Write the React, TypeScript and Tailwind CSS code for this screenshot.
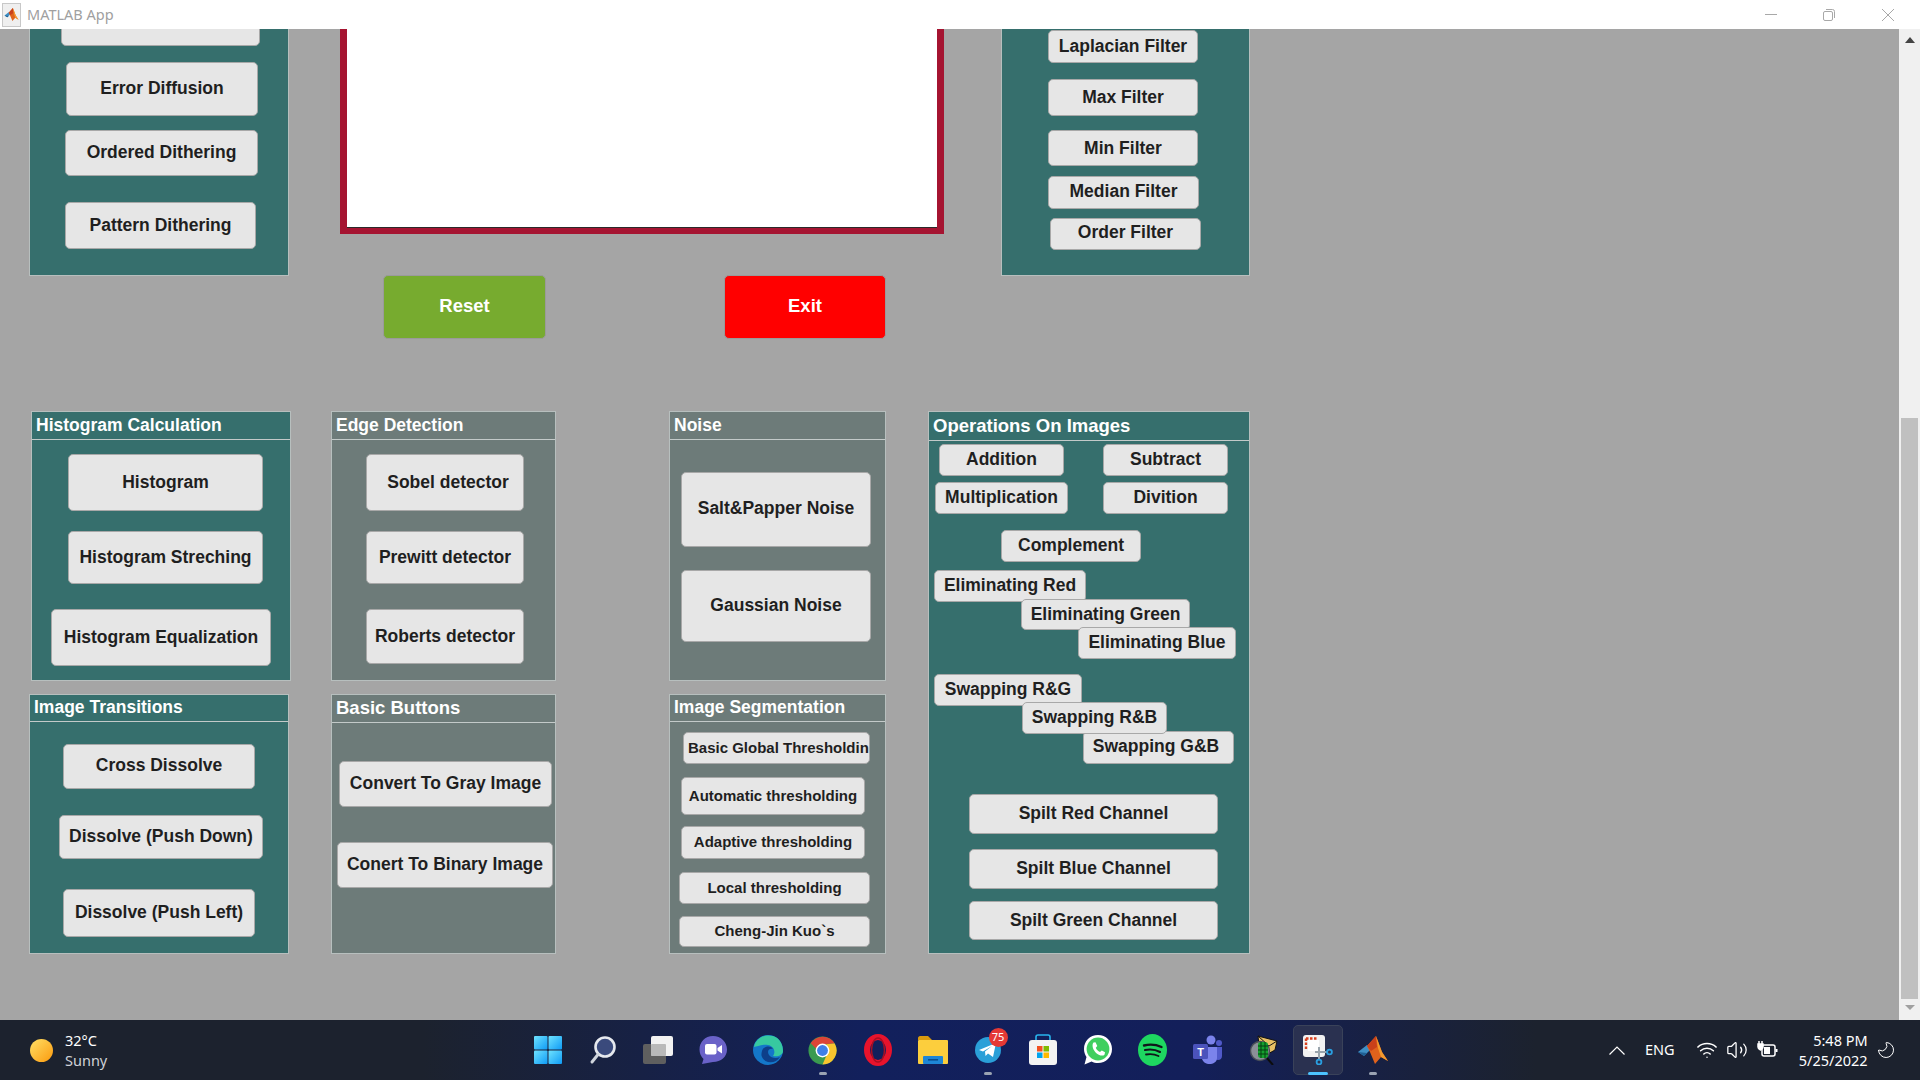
import React from "react";
import { Moon, Volume2, Wifi } from "lucide-react";

function Btn({ label, className, small }: { label: string; className: string; small?: boolean }) {
  return (
    <button className={`flex shrink-0 items-center justify-center overflow-hidden whitespace-nowrap rounded-[5px] border border-[#a8a8a8] bg-[#e6e6e6] font-bold text-[#1f1f1f] ${small ? "text-[15px]" : "pb-[1px] text-[17.5px]"} ${className}`}>
      {label}
    </button>
  );
}

function Panel({ title, className, headerClass, children }: { title: string; className: string; headerClass: string; children: React.ReactNode }) {
  return (
    <div className={`flex shrink-0 flex-col items-start overflow-hidden border border-[#b7bfbe] ${className}`}>
      <div className={`flex w-full shrink-0 items-center border-b border-[#c3cac9] pb-[1px] pl-[4px] font-bold text-white ${headerClass}`}>{title}</div>
      {children}
    </div>
  );
}

function MatlabLogo({ size }: { size: number }) {
  return (
    <svg width={size} height={size} viewBox="0 0 32 32">
      <polygon points="1,18 10,11 14,15 7,22" fill="#3f8fc4" />
      <polygon points="7,22 1,18 10,19" fill="#1f5f94" />
      <polygon points="10,12 19,2 25,18 31,27 24,23 18,30 13,18" fill="#e0621c" />
      <polygon points="10,12 19,2 20,13 14,17" fill="#c9401a" />
      <polygon points="19,2 25,18 31,27 24,23 21,14" fill="#f29a2e" />
    </svg>
  );
}

function Slot({ children, dot }: { children: React.ReactNode; dot?: boolean }) {
  return (
    <div className="relative flex h-[60px] w-[55px] shrink-0 items-center justify-center">
      {children}
      {dot && <div className="absolute bottom-[5px] h-[3px] w-[8px] rounded-full bg-[#9aa3b2]" />}
    </div>
  );
}

function TaskbarIcons() {
  return (
    <div className="flex h-full shrink-0">
      <Slot>
        <svg width="30" height="30" viewBox="0 0 30 30">
          <defs>
            <linearGradient id="win" x1="0" y1="0" x2="1" y2="1">
              <stop offset="0" stopColor="#6fe3ff" />
              <stop offset="1" stopColor="#0f9bf5" />
            </linearGradient>
          </defs>
          <rect x="1" y="1" width="13.5" height="13.5" rx="1" fill="url(#win)" />
          <rect x="15.5" y="1" width="13.5" height="13.5" rx="1" fill="url(#win)" />
          <rect x="1" y="15.5" width="13.5" height="13.5" rx="1" fill="url(#win)" />
          <rect x="15.5" y="15.5" width="13.5" height="13.5" rx="1" fill="url(#win)" />
        </svg>
      </Slot>
      <Slot>
        <svg width="30" height="30" viewBox="0 0 30 30">
          <circle cx="17" cy="12" r="9.5" fill="#3a4a7c" stroke="#e6e9ee" strokeWidth="2.6" />
          <line x1="10" y1="19.5" x2="4" y2="27" stroke="#cfd4dc" strokeWidth="3" strokeLinecap="round" />
        </svg>
      </Slot>
      <Slot>
        <svg width="32" height="30" viewBox="0 0 32 30">
          <rect x="1" y="9" width="23" height="20" rx="2" fill="#5f5f5f" />
          <rect x="9" y="1" width="22" height="20" rx="2" fill="#f2f2f2" />
          <rect x="9" y="9" width="15" height="12" rx="1" fill="#b9b9b9" />
        </svg>
      </Slot>
      <Slot>
        <svg width="30" height="30" viewBox="0 0 30 30">
          <path d="M15 1 C23 1 29 7 29 14.5 C29 22 23 27 15 27 L4 29 L5.5 24 C3 21.5 1.5 18.5 1.5 14.5 C1.5 7 7 1 15 1 Z" fill="#6a62c8" />
          <rect x="7" y="9" width="11.5" height="10.5" rx="2" fill="#fff" />
          <path d="M19.5 13 L24 10 V18.5 L19.5 15.5 Z" fill="#fff" />
        </svg>
      </Slot>
      <Slot>
        <svg width="32" height="32" viewBox="0 0 32 32">
          <circle cx="16" cy="16" r="15" fill="#1477c9" />
          <path d="M2 13 C4 3 14 0 21 2 C28 4 31 11 31 17 C31 21 26 23 21 22 C24 18 22 12 16 11 C10 10 5 13 2 13 Z" fill="#37c9a0" />
          <path d="M10 17 C11 12 19 11 21 15 C16 14 15 18 17 21 C19 24 24 25 28 23 C24 30 13 30 10 23 C9 21 9.5 19 10 17 Z" fill="#0d3f8a" />
        </svg>
      </Slot>
      <Slot dot>
        <svg width="29" height="29" viewBox="0 0 32 32">
          <circle cx="16" cy="16" r="15.5" fill="#3a9a4f" />
          <path d="M3 8 A15.5 15.5 0 0 1 29.4 8.2 L16 9 L9 14 Z" fill="#dc4437" />
          <path d="M29.4 8.2 A15.5 15.5 0 0 1 16 31.5 L22 18 L20 9 Z" fill="#f8c52e" />
          <circle cx="16" cy="16" r="7.6" fill="#fff" />
          <circle cx="16" cy="16" r="6" fill="#3f7fe8" />
        </svg>
      </Slot>
      <Slot>
        <svg width="28" height="32" viewBox="0 0 28 32">
          <ellipse cx="14" cy="16" rx="11" ry="13" fill="none" stroke="#e8132c" strokeWidth="6" />
          <ellipse cx="14" cy="16" rx="6.5" ry="12" fill="none" stroke="#a90f22" strokeWidth="1.5" />
        </svg>
      </Slot>
      <Slot>
        <svg width="32" height="30" viewBox="0 0 32 30">
          <path d="M1 3 C1 2 2 1 3 1 H11 L15 5 H1 Z" fill="#d99a0e" />
          <rect x="1" y="5" width="30" height="24" rx="1" fill="#fcce3d" />
          <rect x="6" y="21" width="20" height="8" rx="1" fill="#1e86d6" />
          <rect x="11" y="24" width="10" height="1.6" fill="#0a4f8f" />
        </svg>
      </Slot>
      <Slot dot>
        <div className="relative">
          <svg width="28" height="30" viewBox="0 0 28 30">
            <circle cx="14" cy="15" r="13" fill="#2a9fd8" />
            <path d="M5 15 L22 8 L19 22 L14 18.5 L11.5 21 L11 16.5 L18 11 L9 16.5 Z" fill="#fff" />
          </svg>
          <div className="absolute left-[15px] top-[-7px] flex h-[19px] w-[19px] items-center justify-center rounded-full bg-[#e53935] font-['Noto_Sans',sans-serif] text-[11px] text-white">75</div>
        </div>
      </Slot>
      <Slot>
        <svg width="30" height="32" viewBox="0 0 30 32">
          <path d="M8 7 V3 C8 2 9 1 10 1 H20 C21 1 22 2 22 3 V7" fill="none" stroke="#28b5ee" strokeWidth="1.6" />
          <rect x="1" y="6" width="28" height="25" rx="3" fill="#f3f3f3" />
          <rect x="9" y="12" width="5.5" height="5.5" fill="#f25022" />
          <rect x="15.5" y="12" width="5.5" height="5.5" fill="#7fba00" />
          <rect x="9" y="18.5" width="5.5" height="5.5" fill="#00a4ef" />
          <rect x="15.5" y="18.5" width="5.5" height="5.5" fill="#ffb900" />
        </svg>
      </Slot>
      <Slot>
        <svg width="30" height="32" viewBox="0 0 30 32">
          <path d="M15 1 C23 1 29 7 29 15 C29 23 23 29 15 29 C12.6 29 10.5 28.4 8.6 27.4 L1.5 30.5 L3.5 23 C2 20.8 1 18 1 15 C1 7 7 1 15 1 Z" fill="#fff" />
          <circle cx="15" cy="15" r="11.4" fill="#3fcf5f" />
          <path d="M10.5 8.5 L12.5 8.3 L14.3 12 L12.8 13.8 C13.6 15.8 15 17.2 17 18 L18.8 16.4 L22 18.2 L21.6 20.4 C20 22.4 16.5 21.8 13.4 19.2 C10 16.2 8.4 11 10.5 8.5 Z" fill="#fff" />
        </svg>
      </Slot>
      <Slot>
        <svg width="29" height="32" viewBox="0 0 29 32">
          <ellipse cx="14.5" cy="16" rx="14.5" ry="16" fill="#1ed760" />
          <path d="M6 11.5 C12 10 18 10.5 23.5 13" fill="none" stroke="#10161a" strokeWidth="2.4" strokeLinecap="round" />
          <path d="M7 16 C12 15 17.5 15.5 22 18" fill="none" stroke="#10161a" strokeWidth="2.1" strokeLinecap="round" />
          <path d="M8 20.5 C12.5 19.6 16.5 20 20.5 22" fill="none" stroke="#10161a" strokeWidth="1.8" strokeLinecap="round" />
        </svg>
      </Slot>
      <Slot>
        <svg width="30" height="30" viewBox="0 0 30 30">
          <circle cx="18" cy="5" r="4.5" fill="#7b83eb" />
          <circle cx="26" cy="8" r="3" fill="#5059c9" />
          <path d="M22 12 H29 V21 C29 25 25 26 22 24 Z" fill="#5059c9" />
          <path d="M9 12 H24 V23 C24 27 20 29 16.5 29 C13 29 10 27 9 24 Z" fill="#7b83eb" />
          <rect x="0" y="9" width="15" height="15" rx="1.5" fill="#4b53bc" />
          <text x="7.5" y="21" textAnchor="middle" fontSize="11" fontWeight="700" fontFamily="Liberation Sans, sans-serif" fill="#fff">T</text>
        </svg>
      </Slot>
      <Slot>
        <svg width="30" height="30" viewBox="0 0 30 30">
          <polygon points="10,1 29,6 27,15 18,20 11,10" fill="#e8c064" stroke="#141414" strokeWidth="1" />
          <path d="M10 1 L21 11 L29 6" fill="none" stroke="#141414" strokeWidth="1" />
          <circle cx="12" cy="16" r="9.5" fill="#8b9097" stroke="#4a4f57" strokeWidth="1.4" />
          <rect x="10" y="7" width="10" height="16" rx="3" fill="#14a02e" />
          <path d="M10 11 H20 M10 15 H20 M10 19 H20 M13 7 V23 M17 7 V23" stroke="#063d12" strokeWidth="1" />
          <line x1="19" y1="23" x2="25" y2="30" stroke="#0c0c0c" strokeWidth="2" />
        </svg>
      </Slot>
      <div className="relative flex h-[60px] w-[55px] shrink-0 items-center justify-center">
        <div className="absolute left-[3px] top-[5px] h-[50px] w-[50px] rounded-[5px] border border-[#3a4259] bg-[#2a3150]" />
        <svg className="relative" width="30" height="30" viewBox="0 0 30 30">
          <rect x="0" y="0" width="22" height="22" rx="3" fill="#f2f2f2" />
          <path d="M3 3.5 H14 M3 3.5 V15" fill="none" stroke="#d9401f" strokeWidth="2.4" strokeDasharray="2.5 1.5" />
          <path d="M5 5 H16 V16 H5 Z" fill="#fff" />
          <line x1="12" y1="17" x2="25" y2="17" stroke="#9aa5ad" strokeWidth="2" />
          <line x1="16" y1="12" x2="16" y2="24" stroke="#9aa5ad" strokeWidth="2" />
          <circle cx="26.5" cy="17" r="2.4" fill="none" stroke="#2a9fe0" strokeWidth="1.8" />
          <circle cx="16" cy="27" r="2.4" fill="none" stroke="#2a9fe0" strokeWidth="1.8" />
        </svg>
        <div className="absolute bottom-[5px] h-[3px] w-[20px] rounded-full bg-[#4cc2ff]" />
      </div>
      <Slot dot>
        <MatlabLogo size={32} />
      </Slot>
    </div>
  );
}

export default function App() {
  return (
    <div className="flex h-screen w-screen flex-col overflow-hidden bg-[#a5a5a5] font-['Liberation_Sans',Arial,sans-serif]">
      <div className="flex h-[29px] shrink-0 items-center bg-white">
        <div className="ml-[2px] flex h-[24px] w-[19px] items-center justify-center border border-[#c8c8c8] bg-[#efefef]">
          <MatlabLogo size={15} />
        </div>
        <span className="ml-[6px] font-['Noto_Sans',sans-serif] text-[14.5px] text-[#a0a0a0]">MATLAB App</span>
        <div className="ml-auto flex items-center">
          <div className="h-[1px] w-[12px] bg-[#a8a8a8]" />
          <svg className="ml-[46px]" width="12" height="12" viewBox="0 0 12 12" fill="none" stroke="#a8a8a8">
            <rect x="0.5" y="2.5" width="9" height="9" rx="1.5" />
            <path d="M3 0.5 H9.5 A2 2 0 0 1 11.5 2.5 V9" />
          </svg>
          <svg className="ml-[47px] mr-[26px]" width="12" height="12" viewBox="0 0 12 12" stroke="#a8a8a8">
            <path d="M0 0 L12 12 M12 0 L0 12" />
          </svg>
        </div>
      </div>

      <div className="flex min-h-0 flex-1">
        <div className="min-w-0 flex-1 overflow-hidden">
          <div className="flex h-[310px]">
            <div className="ml-[29px] flex h-[247px] w-[260px] shrink-0 flex-col items-start overflow-hidden border border-t-0 border-[#b7bfbe] bg-[#366f6d]">
              <Btn label="" className="ml-[31px] mt-[-20px] h-[37px] w-[199px]" />
              <Btn label="Error Diffusion" className="ml-[36px] mt-[16px] h-[54px] w-[192px]" />
              <Btn label="Ordered Dithering" className="ml-[35px] mt-[14px] h-[46px] w-[193px]" />
              <Btn label="Pattern Dithering" className="ml-[35px] mt-[26px] h-[47px] w-[191px]" />
            </div>

            <div className="ml-[51px] flex w-[604px] shrink-0 flex-col">
              <div className="h-[206px] border-x-[7px] border-b-[6px] border-[#a51431] bg-white shadow-[inset_0_-1px_0_#2a2a2a]" />
              <div className="mt-[41px] flex">
                <button className="ml-[43px] h-[64px] w-[163px] rounded-[5px] border border-[#9a9a9a] bg-[#77ab2f] pb-[2px] text-[18.5px] font-bold text-white">Reset</button>
                <button className="ml-[178px] h-[64px] w-[162px] rounded-[5px] border border-[#9a9a9a] bg-[#ff0000] pb-[2px] text-[18.5px] font-bold text-white">Exit</button>
              </div>
            </div>

            <div className="ml-[57px] flex h-[247px] w-[249px] shrink-0 flex-col items-start overflow-hidden border border-t-0 border-[#b7bfbe] bg-[#366f6d]">
              <Btn label="Laplacian Filter" className="ml-[46px] mt-[1px] h-[33px] w-[150px]" />
              <Btn label="Max Filter" className="ml-[46px] mt-[16px] h-[37px] w-[150px]" />
              <Btn label="Min Filter" className="ml-[46px] mt-[14px] h-[36px] w-[150px] !pb-0" />
              <Btn label="Median Filter" className="ml-[46px] mt-[10px] h-[33px] w-[151px] !pb-[3px]" />
              <Btn label="Order Filter" className="ml-[48px] mt-[9px] h-[32px] w-[151px] !pb-[3px]" />
            </div>
          </div>

          <div className="mt-[72px] flex">
            <div className="ml-[29px] flex w-[262px] shrink-0 flex-col gap-[13px]">
              <Panel title="Histogram Calculation" className="ml-[2px] h-[270px] w-[260px] bg-[#366f6d]" headerClass="h-[28px] text-[17.5px]">
                <Btn label="Histogram" className="ml-[36px] mt-[14px] h-[57px] w-[195px]" />
                <Btn label="Histogram Streching" className="ml-[36px] mt-[20px] h-[53px] w-[195px]" />
                <Btn label="Histogram Equalization" className="ml-[19px] mt-[25px] h-[57px] w-[220px]" />
              </Panel>
              <Panel title="Image Transitions" className="h-[260px] w-[260px] bg-[#366f6d]" headerClass="h-[27px] text-[17.5px]">
                <Btn label="Cross Dissolve" className="ml-[33px] mt-[22px] h-[45px] w-[192px] !pb-[3px]" />
                <Btn label="Dissolve (Push Down)" className="ml-[29px] mt-[26px] h-[44px] w-[204px]" />
                <Btn label="Dissolve (Push Left)" className="ml-[33px] mt-[30px] h-[48px] w-[192px]" />
              </Panel>
            </div>

            <div className="ml-[40px] flex w-[225px] shrink-0 flex-col gap-[13px]">
              <Panel title="Edge Detection" className="h-[270px] w-[225px] bg-[#6d7b79]" headerClass="h-[28px] text-[17.5px]">
                <Btn label="Sobel detector" className="ml-[34px] mt-[14px] h-[57px] w-[158px] pl-[6px]" />
                <Btn label="Prewitt detector" className="ml-[34px] mt-[20px] h-[53px] w-[158px]" />
                <Btn label="Roberts detector" className="ml-[34px] mt-[25px] h-[55px] w-[158px]" />
              </Panel>
              <Panel title="Basic Buttons" className="h-[260px] w-[225px] bg-[#6d7b79]" headerClass="h-[28px] text-[18.5px]">
                <Btn label="Convert To Gray Image" className="ml-[7px] mt-[38px] h-[46px] w-[213px]" />
                <Btn label="Conert To Binary Image" className="ml-[5px] mt-[35px] h-[46px] w-[216px]" />
              </Panel>
            </div>

            <div className="ml-[113px] flex w-[217px] shrink-0 flex-col gap-[13px]">
              <Panel title="Noise" className="h-[270px] w-[217px] bg-[#6d7b79]" headerClass="h-[28px] text-[17.5px]">
                <Btn label="Salt&Papper Noise" className="ml-[11px] mt-[32px] h-[75px] w-[190px] !pb-[2px]" />
                <Btn label="Gaussian Noise" className="ml-[11px] mt-[23px] h-[72px] w-[190px]" />
              </Panel>
              <Panel title="Image Segmentation" className="h-[260px] w-[217px] bg-[#6d7b79]" headerClass="h-[27px] text-[17.5px]">
                <Btn small label="Basic Global Thresholding" className="ml-[13px] mt-[10px] h-[32px] w-[187px] !justify-start pl-[4px]" />
                <Btn small label="Automatic thresholding" className="ml-[11px] mt-[13px] h-[38px] w-[184px]" />
                <Btn small label="Adaptive thresholding" className="ml-[11px] mt-[11px] h-[33px] w-[184px]" />
                <Btn small label="Local thresholding" className="ml-[9px] mt-[13px] h-[32px] w-[191px]" />
                <Btn small label="Cheng-Jin Kuo`s" className="ml-[9px] mt-[12px] h-[31px] w-[191px]" />
              </Panel>
            </div>

            <Panel title="Operations On Images" className="ml-[42px] h-[543px] w-[322px] bg-[#366f6d]" headerClass="h-[29px] text-[18.5px]">
              <div className="mt-[3px] flex">
                <Btn label="Addition" className="ml-[10px] h-[32px] w-[125px]" />
                <Btn label="Subtract" className="ml-[39px] h-[32px] w-[125px]" />
              </div>
              <div className="mt-[6px] flex">
                <Btn label="Multiplication" className="ml-[6px] h-[32px] w-[133px]" />
                <Btn label="Divition" className="ml-[35px] h-[32px] w-[125px]" />
              </div>
              <Btn label="Complement" className="ml-[72px] mt-[16px] h-[32px] w-[140px]" />
              <Btn label="Eliminating Red" className="ml-[5px] mt-[8px] h-[32px] w-[152px]" />
              <Btn label="Eliminating Green" className="ml-[92px] mt-[-3px] h-[31px] w-[169px]" />
              <Btn label="Eliminating Blue" className="ml-[149px] mt-[-3px] h-[32px] w-[158px]" />
              <Btn label="Swapping R&G" className="ml-[5px] mt-[15px] h-[32px] w-[148px]" />
              <Btn label="Swapping R&B" className="relative z-10 ml-[93px] mt-[-4px] h-[32px] w-[145px]" />
              <Btn label="Swapping G&B" className="ml-[154px] mt-[-3px] h-[33px] w-[151px] !pb-[3px] pr-[5px]" />
              <Btn label="Spilt Red Channel" className="ml-[40px] mt-[30px] h-[40px] w-[249px]" />
              <Btn label="Spilt Blue Channel" className="ml-[40px] mt-[15px] h-[40px] w-[249px]" />
              <Btn label="Spilt Green Channel" className="ml-[40px] mt-[12px] h-[39px] w-[249px]" />
            </Panel>
          </div>
        </div>

        <div className="flex w-[21px] shrink-0 flex-col items-center bg-[#f0f0f0]">
          <svg className="mt-[8px]" width="10" height="6" viewBox="0 0 10 6">
            <polygon points="5,0 10,6 0,6" fill="#444" />
          </svg>
          <div className="mt-[375px] h-[581px] w-[17px] bg-[#c0c0c0]" />
          <svg className="mt-[6px]" width="10" height="5" viewBox="0 0 10 5">
            <polygon points="0,0 10,0 5,5" fill="#a0a0a0" />
          </svg>
        </div>
      </div>

      <div className="flex h-[60px] shrink-0 items-center bg-[linear-gradient(90deg,#1c222e_0%,#1c222e_22%,#12205c_45%,#131f5a_62%,#1c222e_80%,#1c222e_100%)] font-['Noto_Sans',sans-serif] text-white">
        <div className="flex h-full flex-1 items-center">
          <div className="ml-[30px] h-[23px] w-[23px] rounded-full bg-[linear-gradient(135deg,#ffe066,#fb9a0e)]" />
          <div className="ml-[12px] flex flex-col text-[14.5px] leading-[20px]">
            <span>32°C</span>
            <span className="text-[#cfd2d8]">Sunny</span>
          </div>
        </div>

        <TaskbarIcons />

        <div className="flex h-full flex-1 items-center">
          <svg className="ml-[209px]" width="16" height="9" viewBox="0 0 16 9" fill="none" stroke="#fff" strokeWidth="1.2">
            <path d="M0.5 8.5 L8 1 L15.5 8.5" />
          </svg>
          <span className="ml-[20px] text-[14.5px]">ENG</span>
          <Wifi className="ml-[21px]" size={22} strokeWidth={1.6} />
          <Volume2 className="ml-[8px]" size={22} strokeWidth={1.4} />
          <svg className="ml-[9px]" width="21" height="18" viewBox="0 0 21 18" fill="none" stroke="#fff" strokeWidth="1.5">
            <rect x="5" y="4" width="13" height="11" rx="2" />
            <rect x="7" y="6" width="6" height="7" fill="#fff" stroke="none" />
            <path d="M18.5 8 H20.5 V11 H18.5" fill="#fff" stroke="none" />
            <path d="M1 3 H6 V6 C6 8 3.5 9 3.5 9 C3.5 9 1 8 1 6 Z M2 0 V3 M5 0 V3" fill="#fff" />
          </svg>
          <div className="ml-[20px] flex w-[70px] flex-col items-end whitespace-nowrap text-[14.5px] leading-[20px]">
            <span>5:48 PM</span>
            <span>5/25/2022</span>
          </div>
          <Moon className="ml-[8px] -scale-x-100" size={20} strokeWidth={1.2} />
        </div>
      </div>
    </div>
  );
}
